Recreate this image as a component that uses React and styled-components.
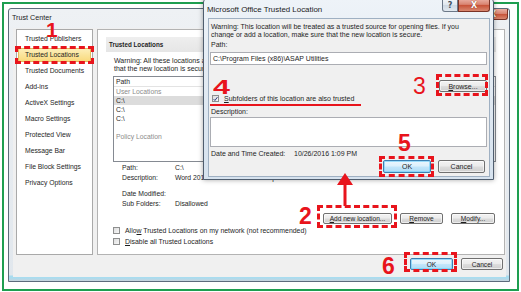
import React from 'react';
import styled, { createGlobalStyle } from 'styled-components';

const RED = '#e8141c';

const Global = createGlobalStyle`
  html, body { margin: 0; padding: 0; background: #fff; }
  body { font-family: "Liberation Sans", Arial, sans-serif; color: #1e1e1e; }
  * { box-sizing: border-box; }
  u { text-decoration: underline; text-underline-offset: 1px; }
`;

const Stage = styled.div`
  position: relative;
  width: 521px;
  height: 292px;
  padding: 2px;
  overflow: hidden;
  background: #fff;
`;

const GreenFrame = styled.div`
  width: 517px;
  height: 289px;
  border: 2px solid #1e9e50;
  padding: 4px;
  background: #fff;
`;

const Window = styled.div`
  width: 502px;
  height: 274px;
  border: 1px solid #5d6b7c;
  border-radius: 3px 3px 0 0;
  background: linear-gradient(
    to bottom,
    #eef1f4 0,
    #e1e7ed calc(100% - 6px),
    #a9dcef calc(100% - 5px),
    #a9dcef calc(100% - 3px),
    #c9d3dc 100%
  );
  display: flex;
  flex-direction: column;
`;

const TitleBar = styled.div`
  height: ${p => p.$h}px;
  flex: none;
  display: flex;
  align-items: flex-start;
  justify-content: space-between;
  padding-left: 3px;
`;

const TitleText = styled.span`
  font-size: ${p => p.$size}px;
  line-height: ${p => p.$lh}px;
  color: #1b1b1b;
  white-space: nowrap;
`;

const CaptionButtons = styled.div`
  display: flex;
  margin-right: ${p => p.$mr}px;
`;

const CaptionBtn = styled.div`
  width: ${p => p.$w}px;
  height: ${p => p.$h}px;
  display: flex;
  align-items: center;
  justify-content: center;
  border: 1px solid ${p => (p.$close ? '#7a3326' : '#6c7888')};
  border-top: none;
  border-radius: ${p => (p.$close ? '0 0 3px 0' : '0 0 0 3px')};
  background: ${p =>
    p.$close
      ? 'linear-gradient(#eab0a4, #d98572 45%, #c75238 52%, #d8876f)'
      : 'linear-gradient(#f3f6f9, #e0e7ee 48%, #cdd7e2 52%, #e2e9f0)'};
  color: ${p => (p.$close ? '#fff' : '#44505e')};
  font: bold 8px "DejaVu Sans", sans-serif;
  text-shadow: ${p => (p.$close ? '0 0 1px #6a1c10' : 'none')};
`;

const Client = styled.div`
  flex: 1;
  margin: 0 3px 4px 4px;
  background: #f0f0f0;
  display: flex;
  flex-direction: column;
`;

const Body = styled.div`
  height: 227px;
  display: flex;
  gap: 4px;
  padding: 1px 1px 0 3px;
`;

const Nav = styled.div`
  width: 77px;
  border: 1px solid #a9a9a9;
  background: #fff;
  padding: 1px;
  display: flex;
  flex-direction: column;
`;

const NavItem = styled.div`
  height: 14px;
  margin: 1px 0;
  padding-left: 7px;
  line-height: 14px;
  font-size: 6.8px;
  white-space: nowrap;
  border-radius: 2px;
  background: ${p => (p.$active ? 'linear-gradient(#fdf0bd, #f8d878)' : 'transparent')};
  box-shadow: ${p => (p.$active ? 'inset 0 0 0 1px #e2bb5c' : 'none')};
`;

const Panel = styled.div`
  flex: 1;
  border: 1px solid #b3b3b3;
  background: #fff;
  padding: 7px 8px 0 8px;
  display: flex;
  flex-direction: column;
  min-width: 0;
`;

const SectionHeader = styled.div`
  height: 15px;
  padding-left: 3px;
  line-height: 15px;
  font-size: 6.3px;
  font-weight: bold;
  background: linear-gradient(#eeeeee, #e6e6e6);
`;

const Text = styled.div`
  font-size: ${p => p.$size || 7}px;
  line-height: ${p => p.$lh}px;
  margin-top: ${p => p.$mt || 0}px;
  padding-left: ${p => p.$pl || 0}px;
  white-space: nowrap;
  overflow: hidden;
`;

const ListView = styled.div`
  margin: 3px 0 0 7px;
  height: 86px;
  border: 1px solid #858a92;
  display: flex;
  flex-direction: column;
`;

const ListHead = styled.div`
  height: 10px;
  flex: none;
  padding-left: 2px;
  line-height: 9px;
  font-size: 6.8px;
  border-bottom: 1px solid #e3e3e3;
  display: flex;
`;

const HeadCell = styled.div`
  width: ${p => p.$w}px;
  border-right: 1px solid #e3e3e3;
`;

const ListRow = styled.div`
  height: 9px;
  flex: none;
  padding-left: 2px;
  line-height: 9px;
  font-size: 6.8px;
  white-space: nowrap;
  color: ${p => (p.$group ? '#8c8c8c' : '#1e1e1e')};
  background: ${p => (p.$selected ? '#dcdcdc' : 'transparent')};
`;

const Details = styled.div`
  margin-top: 1px;
  padding-left: 16px;
  display: flex;
  flex-direction: column;
`;

const DetailRow = styled.div`
  height: ${p => p.$h || 10}px;
  line-height: ${p => p.$h || 10}px;
  font-size: ${p => p.$size || 6.8}px;
  display: flex;
  white-space: nowrap;
  margin-top: ${p => p.$mt || 0}px;
  padding-left: ${p => p.$pl || 0}px;
`;

const DetailLabel = styled.span`
  width: ${p => p.$w}px;
  flex: none;
`;

const ButtonRow = styled.div`
  display: flex;
  justify-content: flex-end;
  gap: ${p => p.$gap}px;
  margin-top: ${p => p.$mt}px;
  padding-right: ${p => p.$pr}px;
  align-self: stretch;
`;

const Button = styled.div`
  width: ${p => p.$w}px;
  height: ${p => p.$h}px;
  flex: none;
  display: flex;
  align-items: center;
  justify-content: center;
  font-size: ${p => p.$size || 6.6}px;
  white-space: nowrap;
  border-radius: 2px;
  border: 1px solid ${p => (p.$default ? '#3c7fb1' : '#707070')};
  background: ${p =>
    p.$default
      ? 'linear-gradient(#ecf6fd, #dcf0fc 48%, #c3e6fb 52%, #afdcf6)'
      : 'linear-gradient(#f3f3f3, #ebebeb 48%, #dddddd 52%, #cfcfcf)'};
  box-shadow: inset 0 0 0 1px ${p => (p.$default ? 'rgba(120,210,250,0.7)' : 'rgba(255,255,255,0.6)')};
`;

const CheckRow = styled.div`
  height: ${p => p.$h}px;
  margin-top: ${p => p.$mt || 0}px;
  display: flex;
  align-items: center;
  gap: 5px;
  padding-left: ${p => p.$pl}px;
  font-size: ${p => p.$size}px;
  white-space: nowrap;
`;

const CheckBox = styled.span`
  width: 7px;
  height: 7px;
  flex: none;
  border: 1px solid #8e8f8f;
  background: linear-gradient(135deg, #dcdcdc, #f8f8f8);
  display: flex;
  align-items: center;
  justify-content: center;
`;

const Footer = styled.div`
  height: 22px;
  display: flex;
  justify-content: flex-end;
  align-items: flex-start;
  gap: 8px;
  padding: 3px 3px 0 0;
`;

/* ---------- overlay dialog ---------- */

const Dialog = styled.div`
  position: absolute;
  left: 203px;
  top: -2px;
  width: 291px;
  height: 182px;
  border: 1px solid #4f5d6e;
  border-radius: 4px 4px 0 0;
  background: linear-gradient(to bottom, #eef3f8, #dfe8f1 60%, #d6e2ee);
  box-shadow: 0 0 5px rgba(0, 0, 0, 0.35);
  display: flex;
  flex-direction: column;
`;

const DlgClient = styled.div`
  flex: 1;
  margin: 0 4px 3px 5px;
  background: #f0f0f0;
  box-shadow: 0 0 0 1px #9fb0c2;
  padding: 4px 2px 0 1px;
  display: flex;
  flex-direction: column;
`;

const Field = styled.div`
  height: ${p => p.$h}px;
  margin-top: ${p => p.$mt}px;
  border: 1px solid #abadb3;
  background: #fff;
  padding-left: 2px;
  font-size: 7px;
  line-height: ${p => p.$h - 2}px;
  white-space: nowrap;
  overflow: hidden;
`;

/* ---------- red annotations ---------- */

const Num = styled.div`
  position: absolute;
  left: ${p => p.$x}px;
  top: ${p => p.$y}px;
  font-family: "Liberation Sans", Arial, sans-serif;
  font-size: ${p => p.$size}px;
  font-weight: ${p => p.$weight || 'bold'};
  line-height: 1;
  color: ${RED};
  transform: scaleX(${p => p.$sx || 1});
  transform-origin: left top;
`;

const DashBox = styled.div`
  position: absolute;
  left: ${p => p.$x}px;
  top: ${p => p.$y}px;
  width: ${p => p.$w}px;
  height: ${p => p.$h}px;
  border: 3px dashed ${RED};
`;

const RedLine = styled.div`
  position: absolute;
  left: ${p => p.$x}px;
  top: ${p => p.$y}px;
  width: ${p => p.$w}px;
  height: 2px;
  background: ${RED};
`;

const ArrowSvg = styled.svg`
  position: absolute;
  left: 335px;
  top: 172px;
`;

const Check = () => (
  <svg width="6" height="6" viewBox="0 0 6 6">
    <path d="M0.8 3.2 L2.3 4.8 L5.3 0.8" fill="none" stroke="#2a3a7a" strokeWidth="1.2" />
  </svg>
);

const navItems = [
  'Trusted Publishers',
  'Trusted Locations',
  'Trusted Documents',
  'Add-ins',
  'ActiveX Settings',
  'Macro Settings',
  'Protected View',
  'Message Bar',
  'File Block Settings',
  'Privacy Options',
];

export default function App() {
  return (
    <>
      <Global />
      <Stage>
        <GreenFrame>
          <Window>
            <TitleBar $h={19}>
              <TitleText $size={7.2} $lh={18}>Trust Center</TitleText>
              <CaptionButtons $mr={1}>
                <CaptionBtn $close $w={30} $h={11}>X</CaptionBtn>
              </CaptionButtons>
            </TitleBar>
            <Client>
              <Body>
                <Nav>
                  {navItems.map(t => (
                    <NavItem key={t} $active={t === 'Trusted Locations'}>{t}</NavItem>
                  ))}
                </Nav>
                <Panel>
                  <SectionHeader>Trusted Locations</SectionHeader>
                  <Text $mt={5} $pl={8} $lh={8}>
                    Warning: All these locations are treated as trusted sources for opening files. If you change or add a location, make sure
                  </Text>
                  <Text $pl={8} $lh={8}>that the new location is secure.</Text>
                  <ListView>
                    <ListHead>
                      <HeadCell $w={150}>Path</HeadCell>
                      <HeadCell $w={120}>Description</HeadCell>
                    </ListHead>
                    <ListRow $group>User Locations</ListRow>
                    <ListRow $selected>C:\</ListRow>
                    <ListRow>C:\</ListRow>
                    <ListRow>C:\</ListRow>
                    <ListRow />
                    <ListRow $group>Policy Location</ListRow>
                  </ListView>
                  <Details>
                    <DetailRow><DetailLabel $w={53}>Path:</DetailLabel>C:\</DetailRow>
                    <DetailRow><DetailLabel $w={53}>Description:</DetailLabel>Word 2016 default location: Templates</DetailRow>
                    <DetailRow $mt={6}><DetailLabel $w={53}>Date Modified:</DetailLabel></DetailRow>
                    <DetailRow><DetailLabel $w={53}>Sub Folders:</DetailLabel>Disallowed</DetailRow>
                  </Details>
                  <ButtonRow $gap={8} $mt={4} $pr={1}>
                    <Button $w={69} $h={11}><span><u>A</u>dd new location...</span></Button>
                    <Button $w={43} $h={11}><span><u>R</u>emove</span></Button>
                    <Button $w={44} $h={11}><span><u>M</u>odify...</span></Button>
                  </ButtonRow>
                  <CheckRow $h={11} $mt={1} $pl={7} $size={6.9}>
                    <CheckBox />
                    <span>Allo<u>w</u> Trusted Locations on my network (not recommended)</span>
                  </CheckRow>
                  <CheckRow $h={11} $pl={7} $size={6.9}>
                    <CheckBox />
                    <span><u>D</u>isable all Trusted Locations</span>
                  </CheckRow>
                </Panel>
              </Body>
              <Footer>
                <Button $w={43} $h={12} $default>OK</Button>
                <Button $w={42} $h={12}>Cancel</Button>
              </Footer>
            </Client>
          </Window>
        </GreenFrame>

        <Dialog>
          <TitleBar $h={20}>
            <TitleText $size={7.9} $lh={21}>Microsoft Office Trusted Location</TitleText>
            <CaptionButtons $mr={3}>
              <CaptionBtn $w={16} $h={13}>?</CaptionBtn>
              <CaptionBtn $close $w={32} $h={13}>X</CaptionBtn>
            </CaptionButtons>
          </TitleBar>
          <DlgClient>
            <Text $pl={1} $lh={7.5}>Warning: This location will be treated as a trusted source for opening files. If you</Text>
            <Text $pl={1} $lh={7.5}>change or add a location, make sure that the new location is secure.</Text>
            <Text $pl={1} $lh={8} $mt={3}>Path:</Text>
            <Field $h={13} $mt={3}>C:\Program Files (x86)\ASAP Utilities</Field>
            <ButtonRow $gap={0} $mt={15} $pr={0}>
              <Button $w={48} $h={12} $size={7}><span><u>B</u>rowse...</span></Button>
            </ButtonRow>
            <CheckRow $h={9} $mt={2} $pl={2} $size={7}>
              <CheckBox><Check /></CheckBox>
              <span><u>S</u>ubfolders of this location are also trusted</span>
            </CheckRow>
            <Text $pl={1} $lh={8} $mt={5}>Description:</Text>
            <Field $h={30} $mt={1} />
            <DetailRow $mt={2} $h={9} $size={7} $pl={1}>
              <DetailLabel $w={83}>Date and Time Created:</DetailLabel>
              10/26/2016 1:09 PM
            </DetailRow>
            <ButtonRow $gap={7} $mt={2} $pr={2}>
              <Button $w={48} $h={13} $default $size={7}>OK</Button>
              <Button $w={47} $h={13} $size={7}>Cancel</Button>
            </ButtonRow>
          </DlgClient>
        </Dialog>

        <DashBox $x={15} $y={46} $w={79} $h={18} />
        <Num $x={46} $y={19} $size={21}>1</Num>

        <DashBox $x={317} $y={205} $w={80} $h={23} />
        <Num $x={299} $y={205} $size={23}>2</Num>

        <DashBox $x={436} $y={74} $w={52} $h={22} />
        <Num $x={413} $y={75} $size={23} $weight="normal">3</Num>

        <Num $x={213} $y={76} $size={21} $sx={1.45}>4</Num>
        <RedLine $x={210} $y={104} $w={151} />

        <DashBox $x={379} $y={156} $w={55} $h={21} />
        <Num $x={398} $y={132} $size={23}>5</Num>

        <DashBox $x={404} $y={252} $w={53} $h={20} />
        <Num $x={382} $y={255} $size={23}>6</Num>

        <ArrowSvg width="20" height="36" viewBox="0 0 20 36">
          <polygon points="10,1 2,13 18,13" fill={RED} />
          <rect x="8.5" y="12" width="3" height="22" fill={RED} />
        </ArrowSvg>
      </Stage>
    </>
  );
}
